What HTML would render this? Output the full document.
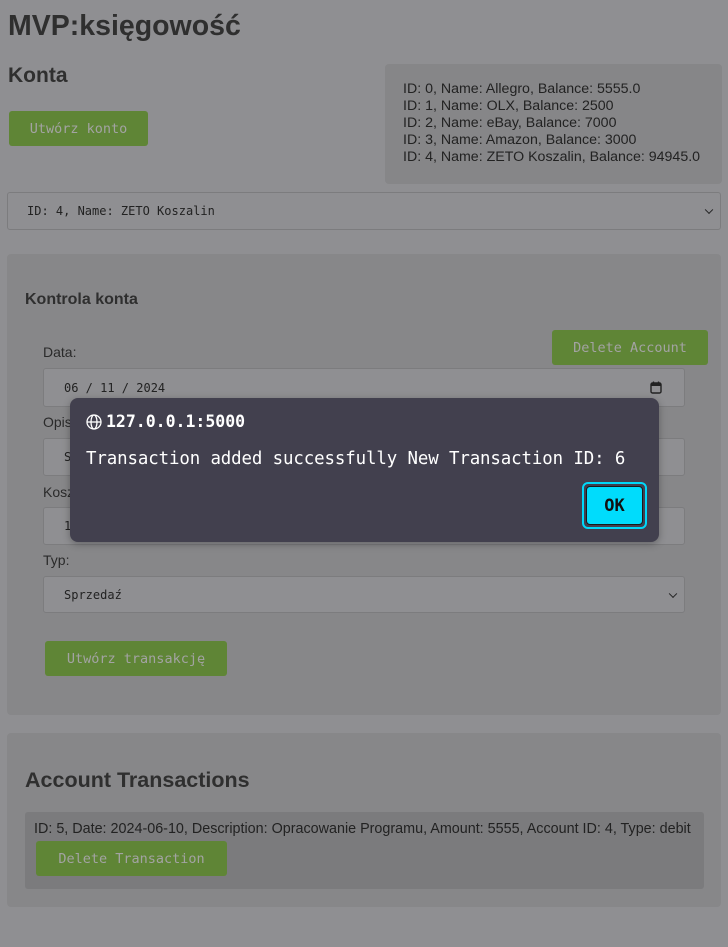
<!DOCTYPE html>
<html><head><meta charset="utf-8"><style>
*{box-sizing:border-box}
body{margin:0;width:728px;height:947px;background:#8f8f92;font-family:"Liberation Sans",sans-serif;color:#333;position:relative;overflow:hidden}
.a{position:absolute}
.btn{position:absolute;background:#5f8536;border-radius:3px;color:#a3a3a3;font-family:"DejaVu Sans Mono",monospace;font-size:13.5px;display:flex;align-items:center;justify-content:center}
.inp{position:absolute;border:1px solid #7c7c7e;border-radius:3px;background:#8f8f92;font-family:"DejaVu Sans Mono",monospace;font-size:12px;color:#222;display:flex;align-items:center;padding-left:20px}
.lbl{position:absolute;font-size:14px;color:#2a2a2a}
.chev{position:absolute;right:8px;top:50%;width:6px;height:6px;border-right:1.5px solid #222;border-bottom:1.5px solid #222;transform:translateY(-70%) rotate(45deg)}
</style></head><body>
<div class="a" style="left:8px;top:10px;font-size:28.5px;font-weight:bold;color:#2f2f2f">MVP:księgowość</div>
<div class="a" style="left:8px;top:64px;font-size:21px;font-weight:bold;color:#2f2f2f">Konta</div>
<div class="btn" style="left:9px;top:111px;width:139px;height:35px">Utwórz konto</div>
<div class="a" style="left:385px;top:64px;width:337px;height:120px;background:#868688;border-radius:4px;padding:17px 0 0 18px;font-size:14.2px;line-height:17px;color:#222">ID: 0, Name: Allegro, Balance: 5555.0<br>ID: 1, Name: OLX, Balance: 2500<br>ID: 2, Name: eBay, Balance: 7000<br>ID: 3, Name: Amazon, Balance: 3000<br>ID: 4, Name: ZETO Koszalin, Balance: 94945.0</div>
<div class="inp" style="left:7px;top:192px;width:714px;height:38px;padding-left:19px">ID: 4, Name: ZETO Koszalin<span class="chev"></span></div>

<div class="a" style="left:7px;top:254px;width:714px;height:461px;background:#878789;border-radius:4px"></div>
<div class="a" style="left:25px;top:291px;font-size:16px;font-weight:bold;color:#2f2f2f">Kontrola konta</div>
<div class="btn" style="left:552px;top:330px;width:156px;height:35px">Delete Account</div>
<div class="lbl" style="left:43px;top:344px">Data:</div>
<div class="inp" style="left:43px;top:368px;width:642px;height:39px">06 / 11 / 2024
<svg class="a" style="right:22px;top:12px" width="12" height="13" viewBox="0 0 12 13"><rect x="1" y="2" width="10" height="10" rx="1.5" fill="none" stroke="#222" stroke-width="1.4"/><rect x="1" y="2" width="10" height="3" fill="#222"/><path d="M3.5 0.5v2M8.5 0.5v2" stroke="#222" stroke-width="1.3"/></svg></div>
<div class="lbl" style="left:43px;top:414px">Opis</div>
<div class="inp" style="left:43px;top:438px;width:642px;height:38px">S</div>
<div class="lbl" style="left:43px;top:484px">Kosz</div>
<div class="inp" style="left:43px;top:507px;width:642px;height:38px">1</div>
<div class="lbl" style="left:43px;top:552px">Typ:</div>
<div class="inp" style="left:43px;top:576px;width:642px;height:37px">Sprzedaź<span class="chev"></span></div>
<div class="btn" style="left:45px;top:641px;width:182px;height:35px">Utwórz transakcję</div>

<div class="a" style="left:7px;top:733px;width:714px;height:174px;background:#878789;border-radius:4px"></div>
<div class="a" style="left:25px;top:768px;font-size:21.5px;font-weight:bold;color:#2f2f2f">Account Transactions</div>
<div class="a" style="left:25px;top:812px;width:679px;height:77px;background:#7b7b7d;border-radius:3px;padding:9px 0 0 9px;font-size:14.35px;color:#222;white-space:nowrap">ID: 5, Date: 2024-06-10, Description: Opracowanie Programu, Amount: 5555, Account ID: 4, Type: debit</div>
<div class="btn" style="left:36px;top:841px;width:191px;height:35px">Delete Transaction</div>

<div class="a" style="left:70px;top:398px;width:589px;height:144px;background:#42404e;border-radius:8px;box-shadow:0 2px 8px rgba(0,0,0,.3)"></div>
<svg class="a" style="left:86px;top:414px" width="16" height="16" viewBox="0 0 16 16"><g fill="none" stroke="#fff" stroke-width="1.3"><circle cx="8" cy="8" r="7"/><ellipse cx="8" cy="8" rx="3" ry="7"/><path d="M1 8h14"/></g></svg>
<div class="a" style="left:106px;top:412px;font-family:'DejaVu Sans Mono',monospace;font-weight:bold;font-size:16.5px;color:#fff">127.0.0.1:5000</div>
<div class="a" style="left:86px;top:449px;font-family:'DejaVu Sans Mono',monospace;font-size:17.4px;color:#fff;letter-spacing:-0.1px;white-space:nowrap">Transaction added successfully New Transaction ID: 6</div>
<div class="a" style="left:582px;top:482px;width:65px;height:47px;border:2px solid #00d8f8;border-radius:6px;padding:2px"><div style="width:100%;height:100%;background:#00dcfc;border-radius:4px;border:1.5px solid #1a1a1a;display:flex;align-items:center;justify-content:center;font-family:'DejaVu Sans Mono',monospace;font-weight:bold;font-size:17px;color:#111">OK</div></div>
</body></html>
